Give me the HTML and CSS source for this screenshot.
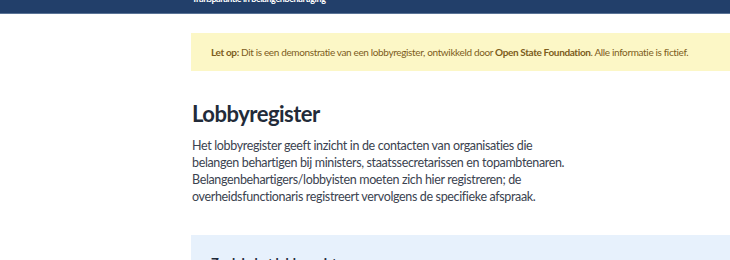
FILE: index.html
```html
<!DOCTYPE html>
<html lang="nl">
<head>
    <meta charset="UTF-8">
    <title>Lobbyregister</title>
    <link rel="stylesheet" href="styles.css">
</head>
<body>

<header class="site-header">
    <div class="site-header-inner">
        <span class="tagline">Transparantie in belangenbehartiging</span>
    </div>
</header>

<main class="page">
    <div class="notice">
        <strong>Let op:</strong> Dit is een demonstratie van een lobbyregister, ontwikkeld door <strong>Open State Foundation</strong>. Alle informatie is fictief.
    </div>

    <h1 class="title">Lobbyregister</h1>
    <p class="intro">
        Het lobbyregister geeft inzicht in de contacten van organisaties die
        belangen behartigen bij ministers, staatssecretarissen en topambtenaren.
        Belangenbehartigers/lobbyisten moeten zich hier registreren; de
        overheidsfunctionaris registreert vervolgens de specifieke afspraak.
    </p>

    <section class="search-box">
        <h2>Zoek in het lobbyregister</h2>
    </section>
</main>

</body>
</html>
```

FILE: styles.css
```css
/* Basis */
html, body {
    margin: 0;
    padding: 0;
    overflow: hidden;
}
body {
    font-family: 'Lato', 'Open Sans', sans-serif;
    background-color: #fff;
    color: #1f2a3a;
}

/* Kop (deels weggescrold) */
.site-header {
    background-color: #223f6a;
    height: 13px;
    border-bottom: 1px solid #5a7396;
    overflow: hidden;
    display: flex;
    align-items: flex-end;
}
.site-header-inner {
    margin-left: 192px;
    padding-bottom: 8px;
}
.tagline {
    color: #fff;
    font-size: 9px;
    font-weight: bold;
    letter-spacing: -0.4px;
    line-height: 12px;
}

/* Inhoud */
.page {
    margin-left: 191px;
    width: 900px;
    padding-top: 19px;
}
.notice {
    background-color: #fcf7c6;
    color: #7d5d1c;
    font-size: 10px;
    letter-spacing: -0.36px;
    padding: 13px 20px;
    line-height: 12px;
}
.notice strong {
    font-weight: bold;
}
.title {
    margin: 29px 0 0 1px;
    font-size: 22px;
    font-weight: bold;
    letter-spacing: -0.5px;
    line-height: 28px;
    color: #222b39;
}
.intro {
    margin: 9px 0 0 1px;
    max-width: 380px;
    font-size: 12.5px;
    letter-spacing: -0.35px;
    line-height: 17px;
    color: #3b4350;
}
.search-box {
    margin-top: 30px;
    background-color: #e7f1fc;
    padding: 20px 20px;
}
.search-box h2 {
    margin: 0;
    font-size: 13px;
    font-weight: bold;
    letter-spacing: -0.3px;
    color: #1f2a3a;
}
```
